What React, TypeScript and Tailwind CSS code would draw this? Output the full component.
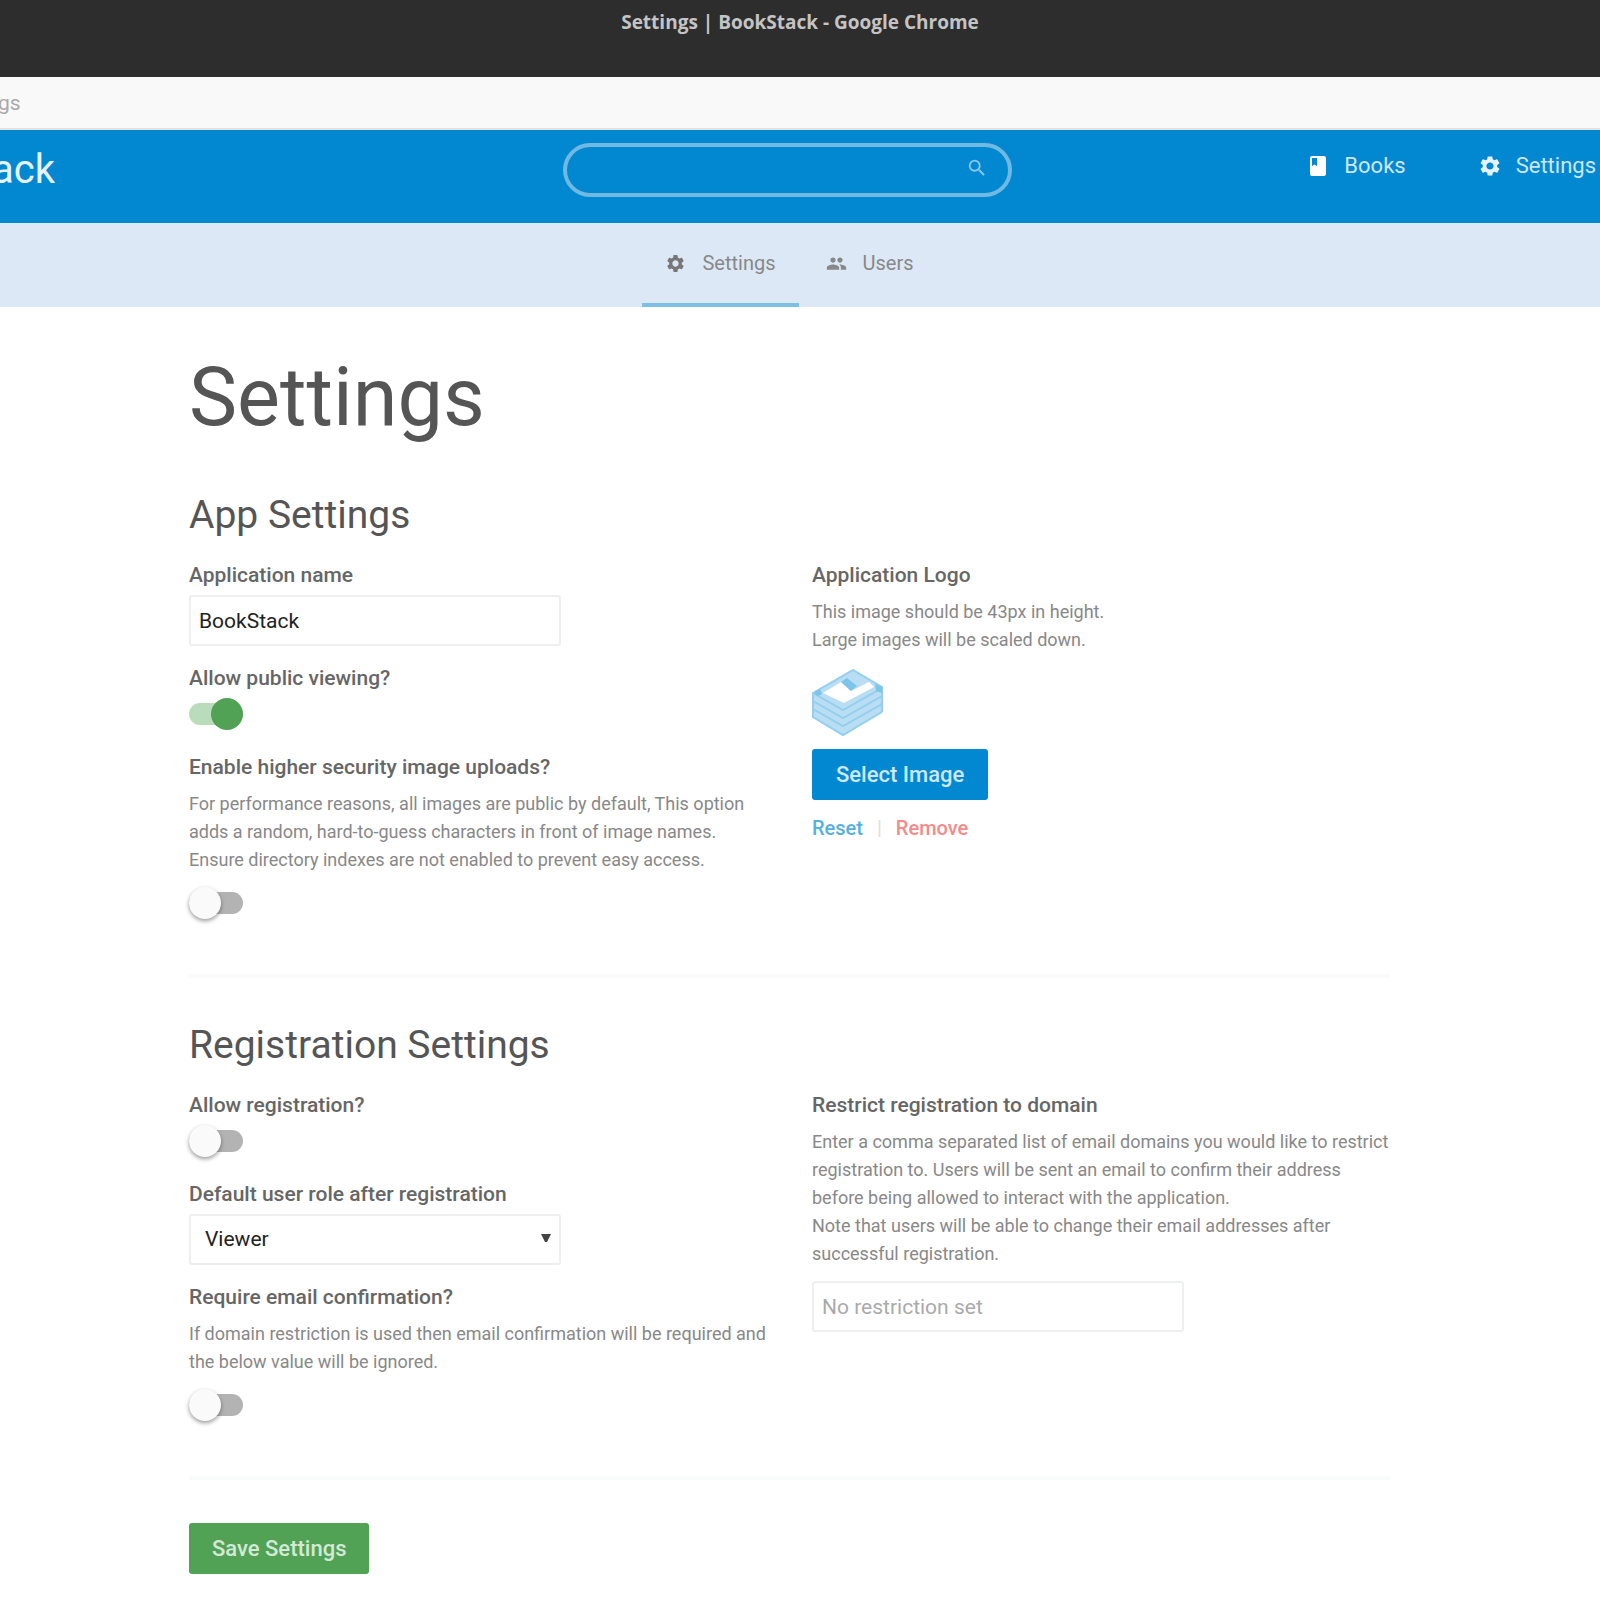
import type { ReactNode } from "react";
import { MdBook, MdGroup, MdSearch, MdSettings } from "react-icons/md";

const inputStyle =
  "h-[51px] w-[372px] max-w-full rounded-[3px] border-2 border-[#eeefef] bg-white px-2 text-[21px] text-[#222]";

function Logo() {
  return (
    <svg viewBox="0 0 72 68" className="my-0.5 h-[68px] w-[72px]" aria-label="BookStack logo" role="img">
      <path d="M1 24 L41 1 L70 18 V43 L31 67 L1 49Z" fill="#b9def3" />
      <g fill="none" stroke="#93cfee" strokeWidth="2">
        <path d="M1 24 L31 41 L70 19" />
        <path d="M1 32 L31 49 L70 27" />
        <path d="M1 40 L31 57 L70 35" />
        <path d="M1 48 L31 66 L70 43" />
        <path d="M1 49 V24 L41 1 L70 18 V43" />
      </g>
      <path d="M11 24 L29 13 L39 22 L57 13 L62 18 L32 34Z" fill="#fff" />
      <path d="M29 13 L35 9 L45 17 L39 22Z" fill="#7cc4ea" />
      <path d="M2 24 L8 20 L10 25 L6 27Z M63 15 L70 18 V24 L64 22Z" fill="#7cc4ea" />
    </svg>
  );
}

function Section({ title, children }: { title: string; children: ReactNode }) {
  return (
    <section className="mb-[43px] border-b-4 border-[#fafbfb] pb-[50px]">
      <h2 className="mb-[22px] text-[39px] leading-[48px]">{title}</h2>
      <div className="grid grid-cols-2 gap-x-[45px]">{children}</div>
    </section>
  );
}

function Column({ children }: { children: ReactNode }) {
  return <div className="flex flex-col gap-[18px]">{children}</div>;
}

function Field({
  id,
  label,
  help,
  children,
}: {
  id: string;
  label: string;
  help?: ReactNode;
  children: ReactNode;
}) {
  return (
    <div className="flex flex-col items-start gap-1.5">
      <label htmlFor={id} className="text-[21px] leading-7 font-medium text-[#666]">
        {label}
      </label>
      {help && (
        <p className="pt-[3px] pb-[7px] text-[18px] leading-7 text-[#888] xl:whitespace-nowrap">{help}</p>
      )}
      {children}
    </div>
  );
}

function Toggle({ id, on = false }: { id: string; on?: boolean }) {
  return (
    <div className="h-[37px] py-[5px]">
      <input
        id={id}
        type="checkbox"
        defaultChecked={on}
        className="relative block h-[22px] w-[54px] appearance-none rounded-full bg-[#b3b3b3] before:absolute before:-top-[5px] before:left-0 before:size-8 before:rounded-full before:bg-[#fafafa] before:shadow-[0_2px_4px_rgba(0,0,0,0.4)] checked:bg-[#b9dcba] checked:before:left-[22px] checked:before:bg-[#52a256] checked:before:shadow-none"
      />
    </div>
  );
}

export default function App() {
  return (
    <div className="min-h-screen bg-white font-[Roboto,sans-serif] text-[#555]">
      <div className="h-[77px] bg-[#2d2d2d] pt-2 text-center font-['Open_Sans',sans-serif] text-[19px] leading-7 font-bold text-[#c4c4c4]">
        Settings | BookStack - Google Chrome
      </div>
      <div className="h-[53px] overflow-hidden border-b-2 border-[#e6e2df] bg-[#f9f9f9] pt-3 text-[21px] leading-7 text-[#aaa]">
        <span className="-ml-0.5">gs</span>
      </div>

      <header className="grid h-[93px] grid-cols-[563fr_449px_588fr] items-start overflow-hidden bg-[#0288d1] pt-[13px] text-white">
        <a href="#" className="-ml-2 text-[40px] leading-[54px] text-[#e6f3fa]">
          ack
        </a>
        <form className="flex h-[54px] items-center rounded-full border-4 border-[#6fb9e3] pr-5 pl-6">
          <input type="text" aria-label="Search" className="min-w-0 flex-1 bg-transparent text-[21px] outline-none" />
          <button type="button" aria-label="Search" className="pb-1 text-[#8cc8e9]">
            <MdSearch size={22} />
          </button>
        </form>
        <nav className="flex justify-end gap-[72px] pr-1 text-[22px] leading-[46px] text-[#cce7f6]">
          <a href="#" className="flex items-center gap-3.5">
            <MdBook size={24} className="text-white" />
            Books
          </a>
          <a href="#" className="flex items-center gap-3.5">
            <MdSettings size={24} className="text-[#e6f3fa]" />
            Settings
          </a>
        </nav>
      </header>

      <div className="bg-[#dce8f6] pr-[21px]">
        <nav className="flex h-[84px] justify-center gap-1 text-[20px] text-[#888]">
          <a href="#" className="flex items-center gap-4 border-b-4 border-[#7cc0e4] px-[23px]">
            <MdSettings size={21} className="text-[#777]" />
            Settings
          </a>
          <a href="#" className="flex items-center gap-4 border-b-4 border-transparent px-[23px]">
            <MdGroup size={21} />
            Users
          </a>
        </nav>
      </div>

      <div className="pr-[21px]">
        <main className="mx-auto max-w-[1201px] pt-[43px] pb-6">
          <h1 className="mb-[45px] text-[81px] leading-24">Settings</h1>

          <form>
            <Section title="App Settings">
              <Column>
                <Field id="app-name" label="Application name">
                  <input id="app-name" type="text" defaultValue="BookStack" className={inputStyle} />
                </Field>
                <Field id="app-public" label="Allow public viewing?">
                  <Toggle id="app-public" on />
                </Field>
                <Field
                  id="app-secure-images"
                  label="Enable higher security image uploads?"
                  help={
                    <>
                      For performance reasons, all images are public by default, This option
                      <br />
                      adds a random, hard-to-guess characters in front of image names.
                      <br />
                      Ensure directory indexes are not enabled to prevent easy access.
                    </>
                  }
                >
                  <Toggle id="app-secure-images" />
                </Field>
              </Column>
              <Column>
                <Field
                  id="app-logo"
                  label="Application Logo"
                  help={
                    <>
                      This image should be 43px in height.
                      <br />
                      Large images will be scaled down.
                    </>
                  }
                >
                  <Logo />
                  <button
                    id="app-logo"
                    type="button"
                    className="mt-1 h-[51px] rounded-[3px] bg-[#0288d1] px-6 text-[22px] font-medium text-[#cce7f6]"
                  >
                    Select Image
                  </button>
                  <div className="flex gap-3.5 pt-2 text-[20px] leading-7 font-medium">
                    <button type="button" className="text-[#55b0e0]">
                      Reset
                    </button>
                    <span className="font-normal text-[#ddd]">|</span>
                    <button type="button" className="text-[#f58a8a]">
                      Remove
                    </button>
                  </div>
                </Field>
              </Column>
            </Section>

            <Section title="Registration Settings">
              <Column>
                <Field id="reg-enabled" label="Allow registration?">
                  <Toggle id="reg-enabled" />
                </Field>
                <Field id="reg-role" label="Default user role after registration">
                  <div className="relative max-w-full">
                    <select id="reg-role" className={inputStyle + " appearance-none pl-3.5"}>
                      <option>Viewer</option>
                    </select>
                    <svg
                      viewBox="0 0 10 8"
                      className="pointer-events-none absolute top-5 right-2.5 h-2 w-2.5"
                      aria-hidden="true"
                    >
                      <path d="M0 0 H10 L6 8 H4Z" fill="#444" />
                    </svg>
                  </div>
                </Field>
                <Field
                  id="reg-confirm"
                  label="Require email confirmation?"
                  help={
                    <>
                      If domain restriction is used then email confirmation will be required and
                      <br />
                      the below value will be ignored.
                    </>
                  }
                >
                  <Toggle id="reg-confirm" />
                </Field>
              </Column>
              <Column>
                <Field
                  id="reg-domain"
                  label="Restrict registration to domain"
                  help={
                    <>
                      Enter a comma separated list of email domains you would like to restrict
                      <br />
                      registration to. Users will be sent an email to confirm their address
                      <br />
                      before being allowed to interact with the application.
                      <br />
                      Note that users will be able to change their email addresses after
                      <br />
                      successful registration.
                    </>
                  }
                >
                  <input
                    id="reg-domain"
                    type="text"
                    placeholder="No restriction set"
                    className={inputStyle + " placeholder:text-[#aaa]"}
                  />
                </Field>
              </Column>
            </Section>

            <button
              type="submit"
              className="h-[51px] rounded-[3px] bg-[#52a256] px-[23px] text-[22px] font-medium text-[#d4e9d5]"
            >
              Save Settings
            </button>
          </form>
        </main>
      </div>
    </div>
  );
}
